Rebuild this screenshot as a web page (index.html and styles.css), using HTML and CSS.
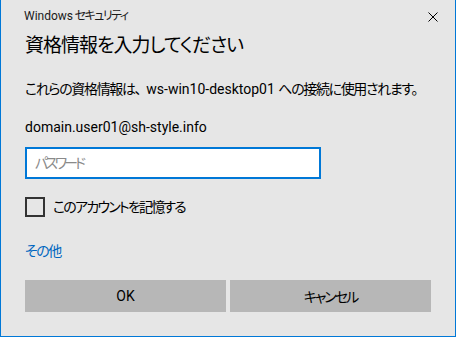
FILE: index.html
```html
<!DOCTYPE html>
<html lang="ja">
<head>
    <meta charset="UTF-8" />
    <meta name="viewport" content="width=device-width, initial-scale=1.0"/>
    <title>Windows セキュリティ</title>
    <link rel="stylesheet" href="styles.css">
</head>
<body>
<div class="dialog">
    <div class="titlebar">
        <span class="title"><span class="en">Windows</span> セキュリティ</span>
        <span class="close">
            <svg width="10" height="10" viewBox="0 0 10 10">
                <path d="M0.5 0.5 L9.5 9.5 M9.5 0.5 L0.5 9.5" stroke="#000" stroke-width="1" fill="none"/>
            </svg>
        </span>
    </div>

    <div class="content">
        <h1>資格情報を入力してください</h1>
        <p class="desc">これらの資格情報は、<span class="en host">ws-win10-desktop01 </span>への接続に使用されます。</p>
        <p class="user">domain.user01@sh-style.info</p>
        <input type="password" class="password" placeholder="パスワード" />
        <label class="remember">
            <span class="box"></span>
            このアカウントを記憶する
        </label>
        <a class="more" href="#">その他</a>
        <div class="buttons">
            <button type="submit">OK</button>
            <button type="button" class="cancel">キャンセル</button>
        </div>
    </div>
</div>
</body>
</html>
```

FILE: styles.css
```css
body {
    margin: 0;
    padding: 0;
    font-family: Roboto, 'Noto Sans CJK JP', sans-serif;
    font-feature-settings: "palt";
    color: #000;
}

.en {
    letter-spacing: 0;
}

.dialog {
    width: 456px;
    height: 337px;
    box-sizing: border-box;
    background-color: #e6e6e6;
    border: 1px solid #0078d7;
    border-top: none;
}

.titlebar {
    height: 30px;
    box-sizing: border-box;
    padding: 8px 17px 0 23px;
    display: flex;
    justify-content: space-between;
    align-items: flex-start;
}

.title {
    font-size: 12px;
    line-height: 16px;
    color: #1a1a1a;
    letter-spacing: -1.5px;
}

.close {
    display: flex;
    margin-top: 4px;
}

.content {
    padding: 0 24px;
    display: flex;
    flex-direction: column;
    align-items: flex-start;
    white-space: nowrap;
}

h1 {
    margin: 2px 0 0;
    font-size: 19px;
    font-weight: normal;
    line-height: 28px;
    letter-spacing: -1px;
}

.desc {
    margin: 19px 0 0;
    font-size: 14px;
    line-height: 20px;
    letter-spacing: -1.35px;
}

.host {
    margin-left: 6px;
}

.user {
    margin: 18px 0 0;
    font-size: 14px;
    line-height: 20px;
}

.password {
    margin: 10px 0 0;
    width: 296px;
    height: 32px;
    box-sizing: border-box;
    border: 2px solid #0078d7;
    background-color: #fff;
    padding: 0 8px;
    font-family: inherit;
    font-feature-settings: "palt";
    font-size: 14px;
    outline: none;
}

.password::placeholder {
    color: #8a8a8a;
    letter-spacing: -3px;
}

.remember {
    margin-top: 18px;
    display: flex;
    align-items: center;
    gap: 8px;
    font-size: 14px;
    line-height: 20px;
    letter-spacing: -1.8px;
}

.box {
    width: 20px;
    height: 20px;
    box-sizing: border-box;
    border: 2px solid #333;
}

.more {
    margin-top: 24px;
    font-size: 14px;
    line-height: 20px;
    color: #0067c0;
    text-decoration: none;
    letter-spacing: -1.5px;
}

.buttons {
    margin-top: 19px;
    align-self: stretch;
    display: flex;
    gap: 4px;
}

button {
    flex: 1;
    height: 32px;
    border: none;
    background-color: #b7b7b7;
    font-family: inherit;
    font-feature-settings: "palt";
    font-size: 14px;
    color: #000;
}

.cancel {
    letter-spacing: -2px;
}
```
